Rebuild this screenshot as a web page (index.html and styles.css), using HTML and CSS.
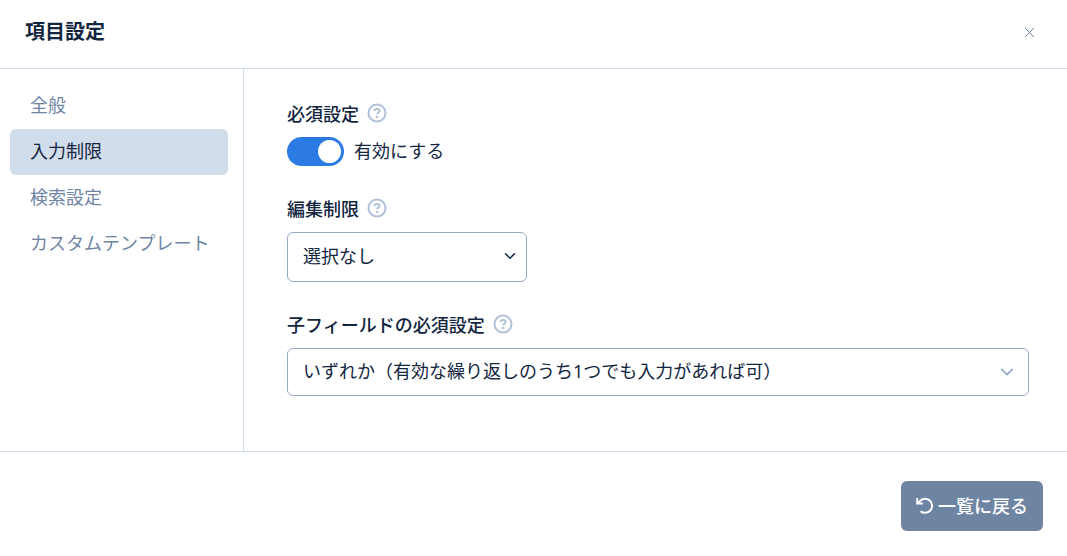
FILE: index.html
```html
<!DOCTYPE html>
<html lang="ja">
<head>
<meta charset="utf-8">
<meta name="viewport" content="width=device-width, initial-scale=1">
<title>項目設定</title>
<link rel="stylesheet" href="styles.css">
</head>
<body>
<svg class="sprite" aria-hidden="true">
  <symbol id="help" viewBox="0 0 20 20">
    <circle cx="10" cy="10" r="8.5" fill="none" stroke="currentColor" stroke-width="2"/>
    <path d="M7.4 8c.2-1.4 1.2-2.1 2.6-2.1 1.5 0 2.6.8 2.6 2.1 0 1.6-2.4 1.6-2.4 3.3" fill="none" stroke="currentColor" stroke-width="2"/>
    <circle cx="10.1" cy="14" r="1.3" fill="currentColor"/>
  </symbol>
  <symbol id="chevron" viewBox="0 0 14 14">
    <path d="M1.8 4.4 7 9.6l5.2-5.2" fill="none" stroke="currentColor" stroke-width="1.8" stroke-linecap="round" stroke-linejoin="round"/>
  </symbol>
</svg>
<div class="dialog" role="dialog" aria-labelledby="title">
  <header class="header">
    <h1 class="title" id="title">項目設定</h1>
    <button class="close" type="button" aria-label="閉じる">
      <svg width="11" height="11" viewBox="0 0 11 11"><path d="M1 1l9 9M10 1l-9 9" stroke="currentColor" stroke-width="1"/></svg>
    </button>
  </header>
  <div class="body">
    <nav class="nav">
      <a class="nav-item" href="#general">全般</a>
      <a class="nav-item active" href="#limits" aria-current="page">入力制限</a>
      <a class="nav-item" href="#search">検索設定</a>
      <a class="nav-item" href="#template">カスタムテンプレート</a>
    </nav>
    <main class="content">
      <section class="field">
        <div class="label-row">
          <span class="label">必須設定</span>
          <button class="help" type="button" aria-label="必須設定のヘルプ"><svg class="help-icon"><use href="#help"/></svg></button>
        </div>
        <div class="switch-row">
          <input class="switch" type="checkbox" role="switch" id="required" checked>
          <label class="switch-label" for="required">有効にする</label>
        </div>
      </section>
      <section class="field">
        <div class="label-row">
          <label class="label" for="edit-limit">編集制限</label>
          <button class="help" type="button" aria-label="編集制限のヘルプ"><svg class="help-icon"><use href="#help"/></svg></button>
        </div>
        <div class="select-box short">
          <select class="select tall" id="edit-limit"><option>選択なし</option></select>
          <svg class="chevron dark"><use href="#chevron"/></svg>
        </div>
      </section>
      <section class="field">
        <div class="label-row">
          <label class="label" for="child-required">子フィールドの必須設定</label>
          <button class="help" type="button" aria-label="子フィールドの必須設定のヘルプ"><svg class="help-icon"><use href="#help"/></svg></button>
        </div>
        <div class="select-box">
          <select class="select" id="child-required"><option>いずれか（有効な繰り返しのうち1つでも入力があれば可）</option></select>
          <svg class="chevron"><use href="#chevron"/></svg>
        </div>
      </section>
    </main>
  </div>
  <footer class="footer">
    <button class="back" type="button">
      <svg width="18" height="18" viewBox="0 0 18 18" fill="none" stroke="currentColor" stroke-width="2"><path d="M1.2 1v5.6h5.6"/><path d="M1.4 6.4 4.3 3.7A7 7 0 1 1 4.6 14.2"/><path d="M1.2 3.2v3.4h3.4z" fill="currentColor" stroke="none"/></svg>
      <span>一覧に戻る</span>
    </button>
  </footer>
</div>
</body>
</html>
```
FILE: styles.css
```css
* {
  box-sizing: border-box;
}

body {
  margin: 0;
  background: #fff;
  color: #12263f;
  font-family: "Noto Sans", "Noto Sans CJK JP", sans-serif;
  font-size: 18px;
  line-height: 26px;
}

button,
select {
  font: inherit;
  color: inherit;
}

.sprite {
  position: absolute;
  width: 0;
  height: 0;
}

.dialog {
  display: flex;
  flex-direction: column;
  min-height: 100vh;
}

.header {
  display: flex;
  align-items: center;
  justify-content: space-between;
  padding: 16px 24px 20px 25px;
  border-bottom: 1px solid #d2ddec;
}

.title {
  margin: 0;
  font-size: 20px;
  line-height: 32px;
  font-weight: 700;
}

.close {
  display: flex;
  padding: 8px;
  border: 0;
  background: none;
  color: #6e84a3;
}

.body {
  display: flex;
  flex: 1;
}

.nav {
  flex: none;
  width: 244px;
  padding: 14px 15px 14px 10px;
  border-right: 1px solid #d2ddec;
}

.nav-item {
  display: block;
  padding: 9px 16px 11px 20px;
  border-radius: 6px;
  color: #6e84a3;
  text-decoration: none;
}

.nav-item.active {
  background: #d2ddec;
  color: #12263f;
}

.content {
  display: flex;
  flex: 1;
  flex-direction: column;
  gap: 30px;
  padding: 32px 38px 55px 43px;
}

.label-row {
  display: flex;
  align-items: center;
  gap: 8px;
  margin-bottom: 10px;
}

.label {
  font-weight: 500;
}

.help {
  display: flex;
  padding: 0 0 2px;
  border: 0;
  background: none;
  color: #b1c2d9;
}

.help-icon {
  width: 20px;
  height: 20px;
}

.switch-row {
  display: flex;
  align-items: center;
  gap: 10px;
}

.switch-label {
  padding-bottom: 2px;
}

.switch {
  display: flex;
  align-items: center;
  justify-content: flex-end;
  width: 57px;
  height: 29px;
  margin: 0;
  padding: 3px;
  border-radius: 15px;
  background: #2c7be5;
  appearance: none;
}

.switch::before {
  width: 23px;
  height: 23px;
  border-radius: 50%;
  background: #fff;
  content: "";
}

.switch:not(:checked) {
  justify-content: flex-start;
  background: #d2ddec;
}

.select-box {
  display: grid;
  align-items: center;
}

.select-box > * {
  grid-area: 1 / 1;
}

.short {
  max-width: 240px;
}

.select {
  width: 100%;
  height: 48px;
  padding: 0 40px 2px 15px;
  border: 1px solid #95aac9;
  border-radius: 6px;
  background: #fff;
  appearance: none;
}

.tall {
  height: 50px;
}

.chevron {
  justify-self: end;
  width: 14px;
  height: 14px;
  margin-right: 15px;
  color: #95aac9;
  pointer-events: none;
}

.dark {
  width: 12px;
  height: 12px;
  margin: 0 11px 2px 0;
  color: #12263f;
}

.footer {
  display: flex;
  justify-content: flex-end;
  padding: 29px 24px 25px;
  border-top: 1px solid #d2ddec;
}

.back {
  display: flex;
  align-items: center;
  gap: 4px;
  padding: 12px 15px;
  border: 0;
  border-radius: 6px;
  background: #6e84a3;
  color: #fff;
  font-weight: 500;
}
```
